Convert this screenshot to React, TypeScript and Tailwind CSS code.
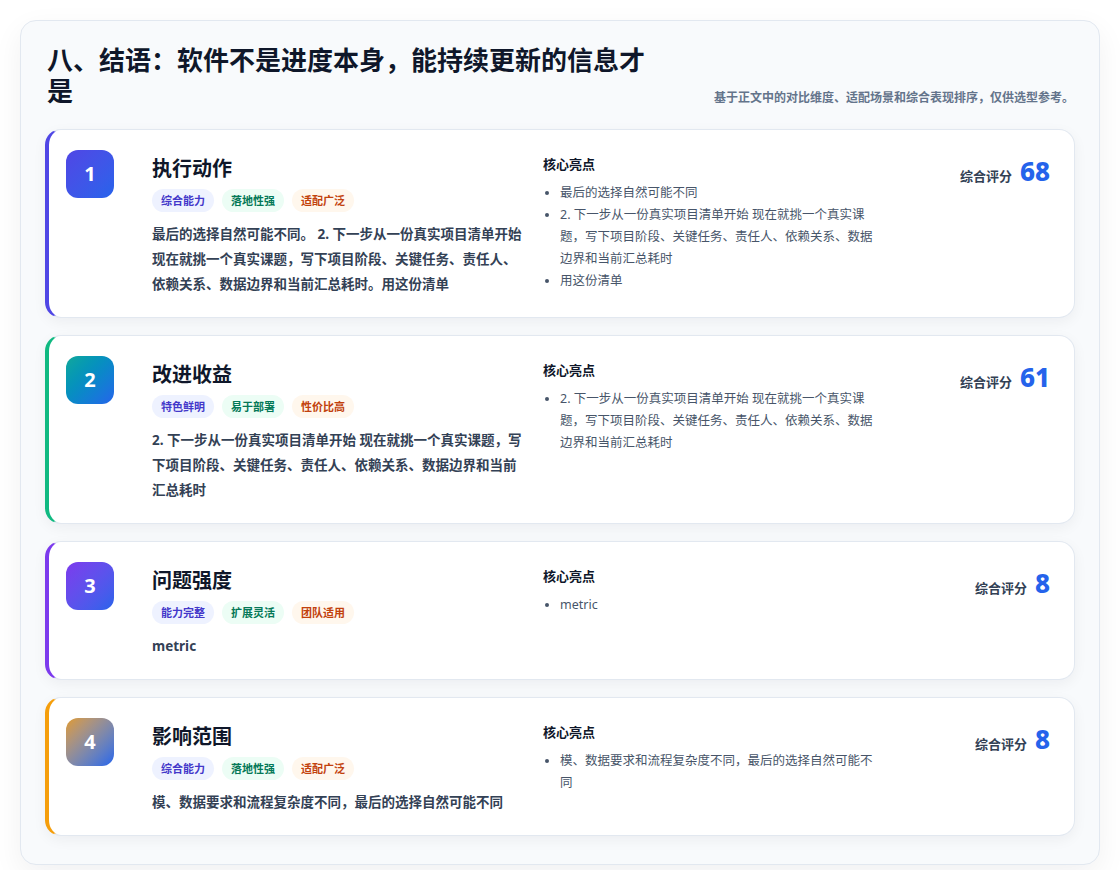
const items = [
    {
        n: "1",
        title: "执行动作",
        border: "border-l-[#4f46e5]",
        grad: "bg-gradient-to-br from-[#4f46e5] to-[#2563eb]",
        tags: ["综合能力", "落地性强", "适配广泛"],
        desc: "最后的选择自然可能不同。 2. 下一步从一份真实项目清单开始 现在就挑一个真实课题，写下项目阶段、关键任务、责任人、依赖关系、数据边界和当前汇总耗时。用这份清单",
        points: [
            "最后的选择自然可能不同",
            "2. 下一步从一份真实项目清单开始 现在就挑一个真实课题，写下项目阶段、关键任务、责任人、依赖关系、数据边界和当前汇总耗时",
            "用这份清单",
        ],
        score: "68",
    },
    {
        n: "2",
        title: "改进收益",
        border: "border-l-[#10b981]",
        grad: "bg-gradient-to-br from-[#14a89a] to-[#2563eb]",
        tags: ["特色鲜明", "易于部署", "性价比高"],
        desc: "2. 下一步从一份真实项目清单开始 现在就挑一个真实课题，写下项目阶段、关键任务、责任人、依赖关系、数据边界和当前汇总耗时",
        points: ["2. 下一步从一份真实项目清单开始 现在就挑一个真实课题，写下项目阶段、关键任务、责任人、依赖关系、数据边界和当前汇总耗时"],
        score: "61",
    },
    {
        n: "3",
        title: "问题强度",
        border: "border-l-[#7c3aed]",
        grad: "bg-gradient-to-br from-[#7c3aed] to-[#2563eb]",
        tags: ["能力完整", "扩展灵活", "团队适用"],
        desc: "metric",
        points: ["metric"],
        score: "8",
    },
    {
        n: "4",
        title: "影响范围",
        border: "border-l-[#f59e0b]",
        grad: "bg-gradient-to-br from-[#e09a1a] to-[#2563eb]",
        tags: ["综合能力", "落地性强", "适配广泛"],
        desc: "模、数据要求和流程复杂度不同，最后的选择自然可能不同",
        points: ["模、数据要求和流程复杂度不同，最后的选择自然可能不同"],
        score: "8",
    },
];

const tagStyles = [
    "bg-[#eef2ff] text-[#4338ca]",
    "bg-[#ecfdf5] text-[#047857]",
    "bg-[#fff7ed] text-[#c2410c]",
];

export default function App() {
    return (
        <div
            className="min-h-[870px] bg-white p-5"
            style={{ fontFamily: '"Noto Sans", "Noto Sans CJK SC", sans-serif' }}
        >
            <div className="rounded-2xl border border-[#e2e8f0] bg-[#f8fafc] px-6 pb-7 pt-6 shadow-[0_10px_30px_rgba(15,23,42,0.06)]">
                <div className="flex items-end justify-between gap-6 pl-[2px]">
                    <h1 className="w-[620px] text-[26px] font-bold leading-[31px] text-[#0f172a]">
                        八、结语：软件不是进度本身，能持续更新的信息才是
                    </h1>
                    <p className="mb-[-2px] w-[368px] pr-[1px] text-right text-[12px] font-semibold leading-[22px] text-[#64748b]">
                        基于正文中的对比维度、适配场景和综合表现排序，仅供选型参考。
                    </p>
                </div>
                <div className="mt-[22px] flex flex-col gap-[17px]">
                    {items.map((it) => (
                        <div
                            key={it.n}
                            className={`flex rounded-2xl border border-[#e2e8f0] border-l-4 ${it.border} bg-white pb-5 pl-[17px] pr-6 pt-[20px] shadow-[0_4px_14px_rgba(15,23,42,0.05)]`}
                        >
                            <div
                                className={`flex h-12 w-12 shrink-0 items-center justify-center rounded-xl ${it.grad} text-[20px] font-bold text-white`}
                            >
                                {it.n}
                            </div>
                            <div className="ml-[38px] w-[372px] shrink-0">
                                <h2 className="pt-[1px] text-[20px] font-bold leading-[36px] text-[#0f172a]">{it.title}</h2>
                                <div className="mt-[2px] flex gap-2">
                                    {it.tags.map((t, i) => (
                                        <span
                                            key={t}
                                            className={`rounded-full px-[9px] py-[2px] text-[11px] font-semibold leading-[19px] ${tagStyles[i]}`}
                                        >
                                            {t}
                                        </span>
                                    ))}
                                </div>
                                <p className="mt-[10px] text-[13.5px] font-bold leading-[25px] text-[#334155]">{it.desc}</p>
                            </div>
                            <div className="ml-[19px] w-[340px] shrink-0 pt-[4px]">
                                <h3 className="text-[13px] font-bold leading-[20px] text-[#0f172a]">核心亮点</h3>
                                <ul className="mt-[8px] list-disc pl-[17px] text-[12.5px] leading-[22px] text-[#475569]">
                                    {it.points.map((p) => (
                                        <li key={p}>{p}</li>
                                    ))}
                                </ul>
                            </div>
                            <div className="flex flex-1 items-baseline justify-end gap-2 pt-[3px]">
                                <span className="text-[13px] font-bold text-[#334155]">综合评分</span>
                                <span className="text-[26px] font-extrabold leading-[36px] text-[#2563eb]">{it.score}</span>
                            </div>
                        </div>
                    ))}
                </div>
            </div>
        </div>
    );
}
